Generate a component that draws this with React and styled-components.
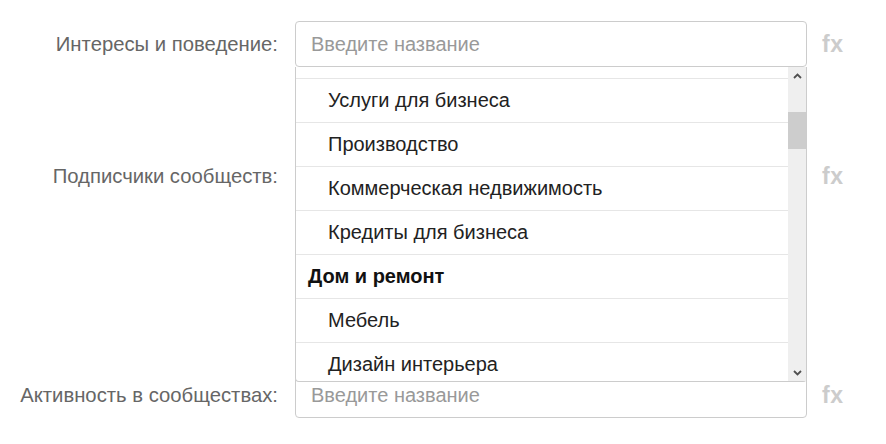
import React from 'react';
import styled, { createGlobalStyle } from 'styled-components';

const GlobalStyle = createGlobalStyle`
  html, body { margin: 0; padding: 0; background: #fff; }
  body { font-family: "Liberation Sans", Arial, sans-serif; }
`;

const Form = styled.div`
  display: flex;
  flex-direction: column;
  width: 886px;
  height: 444px;
  overflow: hidden;
`;

const Row = styled.div`
  display: grid;
  grid-template-columns: 278px 512px auto;
  column-gap: 17px;
  align-items: center;
  margin-top: ${p => p.$space}px;
`;

const Label = styled.label`
  text-align: right;
  font-size: 20.3px;
  color: #666;
  white-space: nowrap;
`;

const Field = styled.div`
  position: relative;
`;

const Input = styled.input`
  box-sizing: border-box;
  width: 100%;
  height: 46px;
  padding: 0 15px;
  border: 1px solid #ccc;
  border-radius: 4px;
  font-family: inherit;
  font-size: 20px;
  color: #333;
  background: #fff;
  outline: none;
  &::placeholder { color: #999; }
`;

const Fx = styled.span`
  font-size: 23px;
  font-weight: bold;
  color: #ccc;
  margin-left: -2px;
  letter-spacing: 0.5px;
`;

const Dropdown = styled.div`
  position: absolute;
  z-index: 10;
  top: 100%;
  left: 0;
  right: 0;
  height: 314px;
  display: flex;
  background: #fff;
  border: 1px solid #ccc;
  border-top: none;
  border-radius: 0 0 4px 4px;
`;

const List = styled.ul`
  flex: 1;
  margin: 0;
  padding: 0;
  list-style: none;
  overflow: hidden;
`;

/* the row above, scrolled almost out of view */
const Peek = styled.li`
  height: 11px;
  border-bottom: 1px solid #e6e6e6;
`;

const Item = styled.li`
  box-sizing: border-box;
  height: 44px;
  display: flex;
  align-items: center;
  padding-left: ${p => (p.$group ? 12 : 32)}px;
  border-bottom: 1px solid #e6e6e6;
  font-size: 20px;
  font-weight: ${p => (p.$group ? 'bold' : 'normal')};
  color: ${p => (p.$group ? '#111' : '#222')};
`;

const Scrollbar = styled.div`
  width: 18px;
  display: flex;
  flex-direction: column;
  background: #efefef;
`;

const ScrollBtn = styled.div`
  height: 17px;
  display: flex;
  align-items: center;
  justify-content: center;
`;

const Track = styled.div`
  flex: 1;
`;

const Thumb = styled.div`
  height: 37px;
  background: #cdcdcd;
`;

const Chevron = ({ up }) => (
  <svg width="9" height="6" viewBox="0 0 9 6">
    <polyline
      points={up ? '1,5 4.5,1.5 8,5' : '1,1 4.5,4.5 8,1'}
      fill="none"
      stroke="#505050"
      strokeWidth="1.8"
    />
  </svg>
);

const options = [
  { t: 'Услуги для бизнеса' },
  { t: 'Производство' },
  { t: 'Коммерческая недвижимость' },
  { t: 'Кредиты для бизнеса' },
  { t: 'Дом и ремонт', group: true },
  { t: 'Мебель' },
  { t: 'Дизайн интерьера' },
];

const App = () => {
  return (
    <>
      <GlobalStyle />
      <Form>
        <Row $space={21}>
          <Label>Интересы и поведение:</Label>
          <Field>
            <Input placeholder="Введите название" />
            <Dropdown>
              <List>
                <Peek />
                {options.map(o => (
                  <Item key={o.t} $group={o.group}>{o.t}</Item>
                ))}
              </List>
              <Scrollbar>
                <ScrollBtn><Chevron up /></ScrollBtn>
                <Track>
                  <Thumb style={{ marginTop: 28 }} />
                </Track>
                <ScrollBtn><Chevron /></ScrollBtn>
              </Scrollbar>
            </Dropdown>
          </Field>
          <Fx>fx</Fx>
        </Row>
        <Row $space={86}>
          <Label>Подписчики сообществ:</Label>
          <Field>
            <Input placeholder="Введите название" />
          </Field>
          <Fx>fx</Fx>
        </Row>
        <Row $space={173}>
          <Label>Активность в сообществах:</Label>
          <Field>
            <Input placeholder="Введите название" />
          </Field>
          <Fx>fx</Fx>
        </Row>
      </Form>
    </>
  );
};

export default App;
